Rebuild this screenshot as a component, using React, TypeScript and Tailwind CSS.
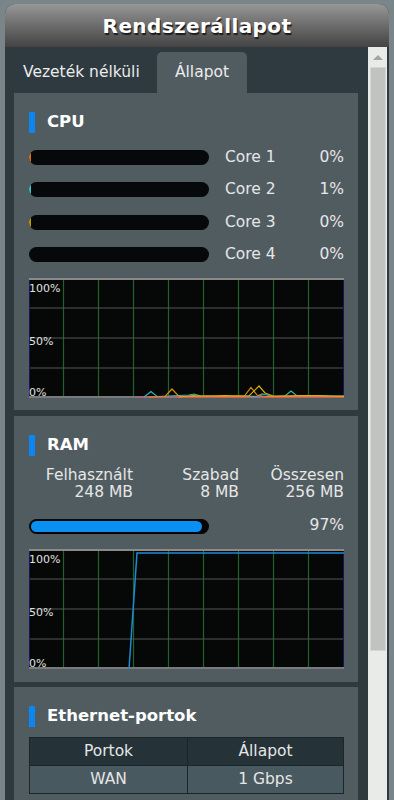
import React from 'react';

const cores = [
  { name: 'Core 1', value: '0%', color: 'bg-[#d9730d]' },
  { name: 'Core 2', value: '1%', color: 'bg-[#37c4c4]' },
  { name: 'Core 3', value: '0%', color: 'bg-[#c99a00]' },
  { name: 'Core 4', value: '0%', color: '' },
];

function SectionTitle({ title }: { title: string }) {
  return (
    <div className="flex items-center gap-[12px] h-[21px]">
      <div className="w-[6px] h-[21px] bg-[#0d86f2]" />
      <span className="text-[16.5px] font-bold text-white leading-none">{title}</span>
    </div>
  );
}

function Chart({ children }: { children?: React.ReactNode }) {
  const vlines = [1, 2, 3, 4, 5, 6, 7, 8];
  return (
    <svg viewBox="0 0 315 120" className="block w-[315px] h-[120px]">
      <rect x="0" y="0" width="315" height="120" fill="#060808" />
      {vlines.map((i) => (
        <line key={i} x1={i * 35 - 0.5} y1="0" x2={i * 35 - 0.5} y2="120" stroke="#22622a" strokeWidth="1.2" />
      ))}
      {[30, 60, 90].map((y) => (
        <line key={y} x1="0" y1={y} x2="315" y2={y} stroke="#555555" strokeWidth="1.2" />
      ))}
      <line x1="0.5" y1="0" x2="0.5" y2="120" stroke="#16165c" strokeWidth="1" />
      <line x1="314.5" y1="0" x2="314.5" y2="120" stroke="#16165c" strokeWidth="1" />
      <line x1="0" y1="1" x2="315" y2="1" stroke="#8a8a8a" strokeWidth="2" />
      <line x1="0" y1="119" x2="315" y2="119" stroke="#7a7a7a" strokeWidth="2" />
      {children}
      <text x="0" y="14" fontSize="11" fill="#e0e0e0" fontFamily="DejaVu Sans, sans-serif">100%</text>
      <text x="0" y="67" fontSize="11" fill="#e0e0e0" fontFamily="DejaVu Sans, sans-serif">50%</text>
      <text x="0" y="118" fontSize="11" fill="#e0e0e0" fontFamily="DejaVu Sans, sans-serif">0%</text>
    </svg>
  );
}

export default function App() {
  return (
    <div
      className="h-screen overflow-hidden bg-[#7a858a] pt-[4px] px-[5px]"
      style={{ fontFamily: '"DejaVu Sans", Verdana, sans-serif' }}
    >
      <div className="h-full flex flex-col rounded-t-[10px] overflow-hidden bg-[#2e3a40]">
        <div className="h-[43px] shrink-0 flex items-center justify-center bg-linear-to-b from-[#979797] to-[#444444]">
          <span className="text-[20px] font-bold text-white tracking-[0.4px] [text-shadow:1px_2px_1px_#1b1b1b]">
            Rendszerállapot
          </span>
        </div>
        <div className="flex flex-1 min-h-0">
          <div className="flex-1 pl-[9px] pr-[10px]">
            <div className="h-[46px] pt-[5px] flex items-stretch">
              <div className="w-[143px] pl-[9px] flex items-center text-[15.5px] text-[#ececec]">
                Vezeték nélküli
              </div>
              <div className="w-[90px] rounded-t-[5px] bg-[#515c61] flex items-center justify-center text-[15.5px] text-[#ececec]">
                Állapot
              </div>
            </div>

            <div className="bg-[#515c61] pt-[19px] pb-[12px] pl-[15px] pr-[14px]">
              <SectionTitle title="CPU" />
              <div className="mt-[8px] flex flex-col">
                {cores.map((c) => (
                  <div key={c.name} className="h-[32.5px] flex items-center">
                    <div className="w-[180px] h-[15px] rounded-full bg-[#060909] overflow-hidden flex">
                      {c.color && <div className={`w-[2px] h-full ${c.color}`} />}
                    </div>
                    <span className="ml-[16px] text-[15.5px] text-[#e6e6e6]">{c.name}</span>
                    <span className="flex-1 text-right text-[15.5px] text-[#e6e6e6]">{c.value}</span>
                  </div>
                ))}
              </div>
              <div className="mt-[7px]">
                <Chart>
                  <polyline fill="none" stroke="#d2527a" strokeWidth="1" points="108,119.5 315,119.5" />
                  <polyline
                    fill="none"
                    stroke="#2fb8b8"
                    strokeWidth="1.2"
                    points="115,119 122,113.5 128,118.5 140,118 150,117.5 160,117 165,116 172,118 180,118.5 200,118.5 210,118 228,118.5 233,116 240,117.5 246,118.5 256,118 262,113 268,118 282,118 290,117.5 300,118 315,118"
                  />
                  <polyline
                    fill="none"
                    stroke="#e08a10"
                    strokeWidth="1.2"
                    points="120,119 136,118.5 143,111 150,118.5 168,118.5 178,118 190,118.5 215,118.5 222,109.5 228,117 236,118.5 260,118.5 280,118 300,118.5 315,118"
                  />
                  <polyline
                    fill="none"
                    stroke="#d8b000"
                    strokeWidth="1.2"
                    points="150,119 164,117.5 172,118 196,117.5 220,118 230,108 236,115 244,118 272,117.5 290,117.5 315,118.5"
                  />
                </Chart>
              </div>
            </div>

            <div className="h-[6px]" />

            <div className="bg-[#515c61] pt-[19px] pb-[13px] pl-[15px] pr-[14px]">
              <SectionTitle title="RAM" />
              <div className="mt-[11px] flex text-[15.5px] leading-[17px] text-[#e6e6e6]">
                <div className="w-[104px] text-right">
                  <div>Felhasznált</div>
                  <div>248 MB</div>
                </div>
                <div className="w-[106px] text-right">
                  <div>Szabad</div>
                  <div>8 MB</div>
                </div>
                <div className="flex-1 text-right">
                  <div>Összesen</div>
                  <div>256 MB</div>
                </div>
              </div>
              <div className="mt-[15px] h-[20px] flex items-center">
                <div className="w-[180px] h-[15px] rounded-full bg-[#050505] p-[2px]">
                  <div className="h-full w-[97%] rounded-full bg-[#0a90f2]" />
                </div>
                <span className="flex-1 text-right text-[15.5px] text-[#e6e6e6]">97%</span>
              </div>
              <div className="mt-[13px]">
                <Chart>
                  <polyline fill="none" stroke="#1d8ad6" strokeWidth="1.5" points="100,120 108,4 315,4" />
                </Chart>
              </div>
            </div>

            <div className="h-[5px]" />

            <div className="bg-[#515c61] pt-[19px] pb-[13px] pl-[15px] pr-[14px]">
              <SectionTitle title="Ethernet-portok" />
              <table className="mt-[10px] w-[315px] border-collapse text-[15.5px] text-[#e6e6e6]">
                <thead>
                  <tr className="bg-[#253238] h-[28px]">
                    <th className="font-normal border border-[#1b262b] w-[158px]">Portok</th>
                    <th className="font-normal border border-[#1b262b]">Állapot</th>
                  </tr>
                </thead>
                <tbody>
                  <tr className="bg-[#485960] h-[28px]">
                    <td className="text-center border border-[#1b262b]">WAN</td>
                    <td className="text-center border border-[#1b262b]">1 Gbps</td>
                  </tr>
                </tbody>
              </table>
            </div>
          </div>

          <div className="w-[21px] pr-[2px] shrink-0">
            <div className="h-full bg-[#e9ebe9] flex flex-col items-center">
              <div className="h-[20px] flex items-center justify-center">
                <div className="w-0 h-0 border-l-[5px] border-r-[5px] border-b-[5px] border-l-transparent border-r-transparent border-b-[#a3a5a3]" />
              </div>
              <div className="w-[16px] h-[584px] bg-[#c1c3c1] border border-[#d4d6d4]" />
            </div>
          </div>
        </div>
      </div>
    </div>
  );
}
